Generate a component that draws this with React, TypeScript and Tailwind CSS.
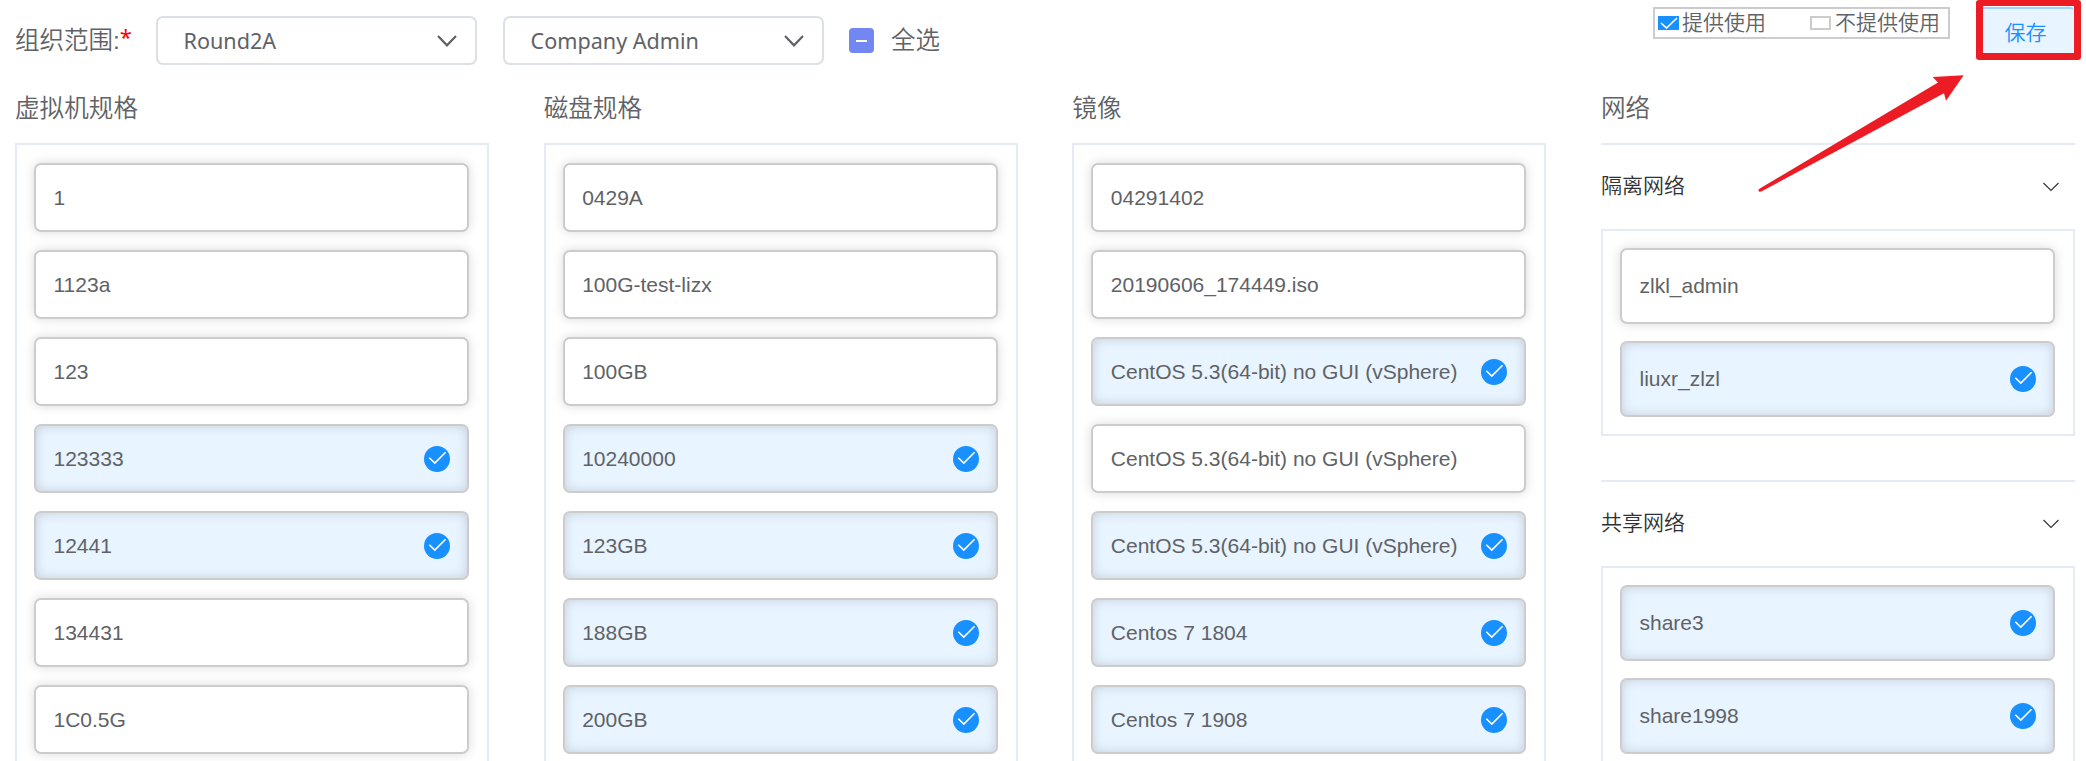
type Item = { name: string; on?: boolean };

const vm: Item[] = [
  { name: '1' },
  { name: '1123a' },
  { name: '123' },
  { name: '123333', on: true },
  { name: '12441', on: true },
  { name: '134431' },
  { name: '1C0.5G' },
];
const disks: Item[] = [
  { name: '0429A' },
  { name: '100G-test-lizx' },
  { name: '100GB' },
  { name: '10240000', on: true },
  { name: '123GB', on: true },
  { name: '188GB', on: true },
  { name: '200GB', on: true },
];
const images: Item[] = [
  { name: '04291402' },
  { name: '20190606_174449.iso' },
  { name: 'CentOS 5.3(64-bit) no GUI (vSphere)', on: true },
  { name: 'CentOS 5.3(64-bit) no GUI (vSphere)' },
  { name: 'CentOS 5.3(64-bit) no GUI (vSphere)', on: true },
  { name: 'Centos 7 1804', on: true },
  { name: 'Centos 7 1908', on: true },
];
const isolated: Item[] = [{ name: 'zlkl_admin' }, { name: 'liuxr_zlzl', on: true }];
const shared: Item[] = [
  { name: 'share3', on: true },
  { name: 'share1998', on: true },
];

function CheckBadge() {
  return (
    <svg width="26" height="26" viewBox="0 0 26 26" className="shrink-0">
      <circle cx="13" cy="13" r="13" fill="#1890ff" />
      <path d="M5.3 11.7 L10.8 17.1 L21.6 6.2" fill="none" stroke="#fff" strokeWidth="1.6" />
    </svg>
  );
}

function Card({ item, tall }: { item: Item; tall?: boolean }) {
  return (
    <div
      className={`flex shrink-0 items-center justify-between rounded-[7px] border-2 border-[#ccc] pr-[17px] pl-[17.5px] text-[21px] leading-none ${
        tall ? 'h-[75.5px]' : 'h-[69px]'
      } ${
        item.on
          ? 'bg-[#e8f4ff] shadow-[inset_0_0_12px_rgba(0,0,0,0.15)]'
          : 'bg-white shadow-[0_0_12px_rgba(0,0,0,0.15)]'
      }`}
    >
      <span className="whitespace-nowrap">{item.name}</span>
      {item.on && <CheckBadge />}
    </div>
  );
}

function Title({ children }: { children: string }) {
  return <h2 className="h-[75px] shrink-0 pt-[23px] text-[24.6px] leading-[36px] font-[350]">{children}</h2>;
}

function Column({ title, items }: { title: string; items: Item[] }) {
  return (
    <section className="flex w-[474px] flex-col">
      <Title>{title}</Title>
      <div className="flex flex-1 flex-col gap-[18px] border-2 border-b-0 border-[#e6eaf7] pt-[18px] pr-[18px] pl-[17px]">
        {items.map((item, i) => (
          <Card key={i} item={item} />
        ))}
      </div>
    </section>
  );
}

function NetworkHeader({ children }: { children: string }) {
  return (
    <div className="flex h-[86px] shrink-0 items-center justify-between border-t-2 border-[#e6eaf7] pr-[16px] pb-[3px] text-[21px] font-[350] text-[#303133]">
      <span>{children}</span>
      <svg width="16" height="10" viewBox="0 0 16 10" className="mt-[2px]">
        <path d="M0.5 1 L8 8.5 L15.5 1" fill="none" stroke="#303133" strokeWidth="1.1" />
      </svg>
    </div>
  );
}

function Select({ value }: { value: string }) {
  return (
    <div className="flex h-[49px] w-[321px] items-center justify-between rounded-[7px] border-2 border-[#dcdfe6] pr-[18px] pl-[25.5px]">
      <span className="pt-px font-['Noto_Sans','Noto_Sans_CJK_SC',sans-serif] text-[21.6px] leading-none">{value}</span>
      <svg width="20" height="12" viewBox="0 0 20 12">
        <path d="M1 1 L10 10.3 L19 1" fill="none" stroke="#606266" strokeWidth="2.2" />
      </svg>
    </div>
  );
}

export default function App() {
  return (
    <div className="relative flex h-[761px] w-[2086px] flex-col overflow-hidden bg-white pl-[15px] font-['Liberation_Sans','Noto_Sans_CJK_SC',sans-serif] text-[#606266]">
      <header className="flex h-[68px] shrink-0 items-start">
        <div className="flex h-[83px] w-[141px] items-center text-[24.5px] font-[350]">
          <span className="flex whitespace-nowrap">
            组织范围:
            <span className="font-['Noto_Sans',sans-serif] text-[22px] leading-[26px] font-normal text-[#f00]">*</span>
          </span>
        </div>
        <div className="flex gap-[26px] pt-[16px]">
          <Select value="Round2A" />
          <Select value="Company Admin" />
        </div>
        <label className="flex h-[81px] items-center pl-[25px] text-[24.5px] font-[350]">
          <span className="mr-[17px] flex size-[25px] items-center justify-center rounded-[4px] bg-[#7387f2]">
            <span className="h-[2px] w-[11px] bg-white" />
          </span>
          <span className="pt-[2px]">全选</span>
        </label>
        <div className="mt-[7px] ml-auto flex h-[32px] w-[297px] items-center border-2 border-[#ccc] pl-[3px] text-[21px] leading-none font-[350]">
          <span className="flex h-[14px] w-[21px] items-center justify-center bg-[#1890ff]">
            <svg width="18" height="12" viewBox="0 0 18 12">
              <path d="M1 6 L6.5 11 L17 1" fill="none" stroke="#fff" strokeWidth="1.6" />
            </svg>
          </span>
          <span className="ml-[3px] w-[128px] pb-[2px]">提供使用</span>
          <span className="h-[14px] w-[21px] border-2 border-[#ccc]" />
          <span className="ml-[4px] pb-[2px]">不提供使用</span>
        </div>
        <div className="mr-[5px] ml-[26px] h-[60px] w-[105px] rounded-[3px] border-x-7 border-t-6 border-b-7 border-[#ed1c24] bg-white">
          <button className="mt-[1px] block h-[46px] w-full rounded-tr-[4px] border-t-2 border-[#a3d3ff] bg-[#e8f4ff] pr-[6px] text-[21px] leading-[47px] font-[350] text-[#1890ff]">
            保存
          </button>
        </div>
      </header>

      <main className="flex flex-1 gap-[54.67px]">
        <Column title="虚拟机规格" items={vm} />
        <Column title="磁盘规格" items={disks} />
        <Column title="镜像" items={images} />
        <section className="flex w-[474px] flex-col">
          <Title>网络</Title>
          <NetworkHeader>隔离网络</NetworkHeader>
          <div className="mb-[44px] flex h-[207px] shrink-0 flex-col gap-[17.5px] border-2 border-[#e6eaf7] py-[17px] pr-[18px] pl-[17px]">
            {isolated.map((item) => (
              <Card key={item.name} item={item} tall />
            ))}
          </div>
          <NetworkHeader>共享网络</NetworkHeader>
          <div className="flex flex-1 flex-col gap-[17.5px] border-2 border-b-0 border-[#e6eaf7] pt-[17px] pr-[18px] pl-[17px]">
            {shared.map((item) => (
              <Card key={item.name} item={item} tall />
            ))}
          </div>
        </section>
      </main>

      <svg className="absolute top-[70px] left-[1750px]" width="220" height="126" viewBox="1750 70 220 126">
        <path
          d="M1963.7 75.2 L1932.7 77 L1938 82.5 L1759 189 Q1757.8 190.5 1759.3 191.7 L1761.3 191.5 L1944 93.3 L1946 100.8 Z"
          fill="#ed1c24"
        />
      </svg>
    </div>
  );
}
